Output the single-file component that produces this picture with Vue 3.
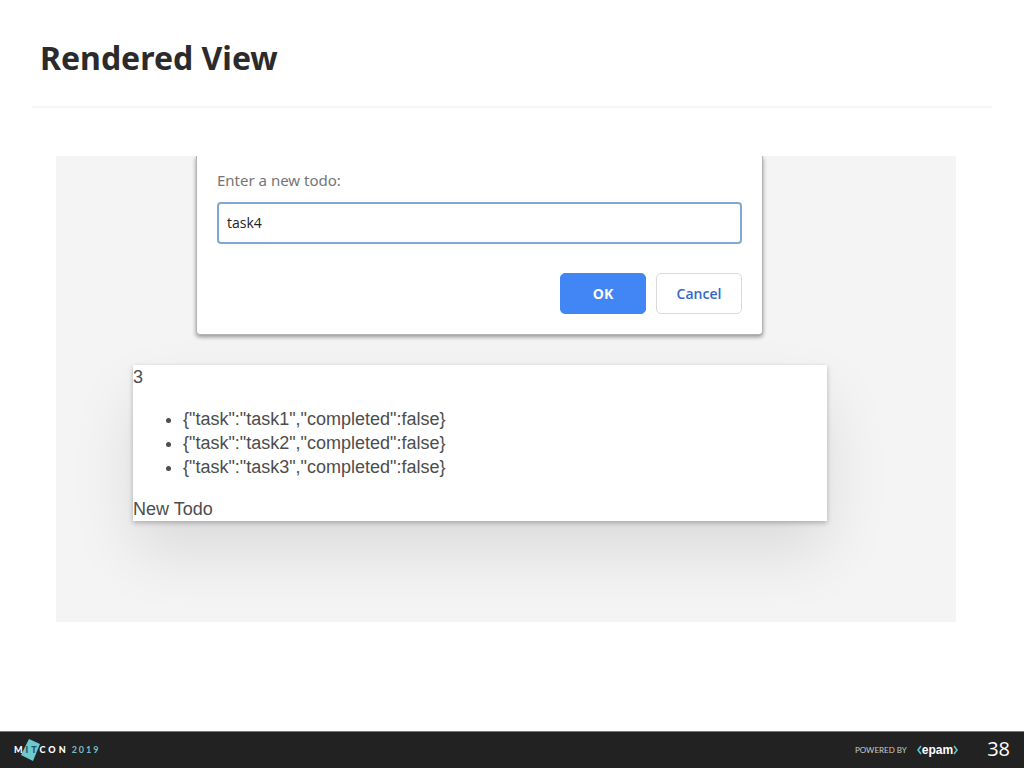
<script setup>
import { ref } from 'vue'

const draft = ref('task4')
const todos = ref([
  { task: 'task1', completed: false },
  { task: 'task2', completed: false },
  { task: 'task3', completed: false },
])
</script>

<template>
  <div class="slide">
    <header class="heading">
      <h1>Rendered View</h1>
    </header>

    <main class="stage">
      <form class="dialog" @submit.prevent>
        <label for="todo">Enter a new todo:</label>
        <input id="todo" v-model="draft" type="text" autocomplete="off" />
        <div class="actions">
          <button class="ok" type="submit">OK</button>
          <button class="cancel" type="button">Cancel</button>
        </div>
      </form>

      <section class="card">
        <div>{{ todos.length }}</div>
        <ul>
          <li v-for="todo in todos" :key="todo.task">{{ JSON.stringify(todo) }}</li>
        </ul>
        <button class="new" type="button">New Todo</button>
      </section>
    </main>

    <footer class="bar">
      <div class="mitcon">
        <svg class="tile" width="20" height="22" viewBox="0 0 20 22" aria-hidden="true">
          <path d="M8 0 19 5 12 22 0 16Z" fill="#6cc9d2" />
        </svg>
        <span class="name">M<span class="dark">IT</span>CON</span>
        <span class="year">2019</span>
      </div>
      <div class="credits">
        <span class="powered">POWERED BY</span>
        <span class="epam">
          <svg width="5" height="10" viewBox="0 0 5 10" aria-hidden="true">
            <path d="M4 1 1 5 4 9" fill="none" stroke="#5fc4cf" stroke-width="1.6" />
          </svg>
          <span>epam</span>
          <svg width="5" height="10" viewBox="0 0 5 10" aria-hidden="true">
            <path d="M1 1 4 5 1 9" fill="none" stroke="#5fc4cf" stroke-width="1.6" />
          </svg>
        </span>
        <span class="page">38</span>
      </div>
    </footer>
  </div>
</template>

<style>
body {
  margin: 0;
  background: #fff;
}
</style>

<style scoped>
.slide {
  display: flex;
  flex-direction: column;
  min-height: 100vh;
  font-family: "Liberation Sans", Arial, sans-serif;
}

.heading {
  margin: 0 32px;
  padding: 34px 8px 24px;
  border-bottom: 2px solid #f5f5f5;
}

h1 {
  margin: 0;
  color: #2b2b2b;
  font: 700 32px/48px "Noto Sans", "Open Sans", sans-serif;
}

.stage {
  box-sizing: border-box;
  margin: 48px 68px 108px 56px;
  padding: 0 129px 101px 77px;
  background: #f4f4f4;
  overflow: hidden;
}

.dialog {
  margin: 0 64px 0 63px;
  padding: 12px 20px 20px;
  border: 1px solid #b4b4b4;
  border-top: 0;
  border-radius: 0 0 4px 4px;
  background: #fff;
  box-shadow: 0 2px 4px rgba(0, 0, 0, 0.4);
  font-family: "Noto Sans", "Open Sans", sans-serif;
}

label {
  display: block;
  color: #757575;
  font-size: 15px;
  line-height: 24px;
}

input {
  box-sizing: border-box;
  display: block;
  width: 100%;
  height: 42px;
  margin-top: 10px;
  padding: 0 8px 2px;
  border: 2px solid #82a6d8;
  border-radius: 4px;
  outline: 0;
  color: #222;
  background: #fff;
  font: 14px "Open Sans", "Noto Sans", sans-serif;
}

.actions {
  display: flex;
  justify-content: flex-end;
  gap: 10px;
  margin-top: 29px;
}

.actions button {
  width: 86px;
  height: 41px;
  padding: 0;
  border: 1px solid #dadada;
  border-radius: 5px;
  color: #3367c8;
  background: #fff;
  font: 600 14px "Open Sans", "Noto Sans", sans-serif;
}

.actions .ok {
  border-color: #4285f4;
  color: #fff;
  background: #4285f4;
  font-weight: 700;
}

.card {
  margin-top: 30px;
  color: #4d4d4d;
  background: #fff;
  box-shadow: 0 2px 5px rgba(0, 0, 0, 0.25), 0 32px 64px rgba(0, 0, 0, 0.1);
  font-size: 18px;
  line-height: 24px;
}

ul {
  margin: 18px 0;
  padding-left: 50px;
}

.new {
  display: block;
  padding: 0;
  border: 0;
  color: inherit;
  background: none;
  font: inherit;
}

.bar {
  display: flex;
  align-items: center;
  justify-content: space-between;
  height: 36px;
  margin-top: auto;
  padding: 0 14px;
  border-top: 1px solid #777;
  color: #fff;
  background: #222;
}

.mitcon {
  position: relative;
  display: flex;
  gap: 3px;
  font: 700 9px/12px Lato, sans-serif;
  letter-spacing: 2px;
}

.tile {
  position: absolute;
  top: -5px;
  left: 7px;
}

.name {
  position: relative;
  font-weight: 900;
  letter-spacing: 3px;
}

.dark {
  color: #1d5660;
}

.year {
  color: #79bcc4;
}

.credits {
  display: flex;
  align-items: center;
}

.powered {
  color: #ccc;
  font: 8px/12px Lato, sans-serif;
}

.epam {
  display: flex;
  align-items: center;
  margin: 0 29px 0 10px;
  font: 700 12px/20px "Liberation Sans", sans-serif;
}

.page {
  padding-bottom: 3px;
  font: 20px/24px "Open Sans", sans-serif;
}
</style>
